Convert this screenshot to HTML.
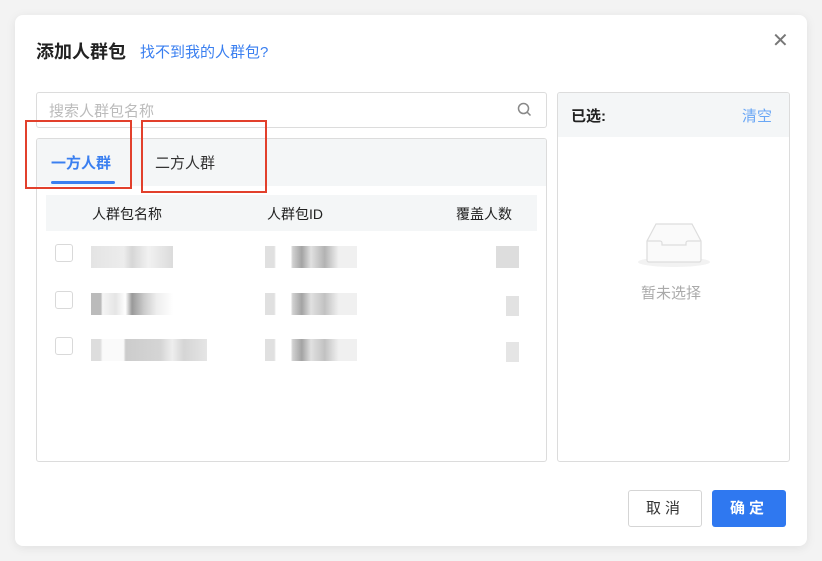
<!DOCTYPE html>
<html><head><meta charset="utf-8"><style>
*{box-sizing:border-box;margin:0;padding:0}
body{width:822px;height:561px;background:#f3f3f3;font-family:"Liberation Sans","Noto Sans CJK SC",sans-serif;position:relative;overflow:hidden}
.a{position:absolute}
.modal{left:15px;top:15px;width:792px;height:531px;background:#fff;border-radius:8px;box-shadow:0 2px 10px rgba(0,0,0,.08)}
.cb{position:absolute;left:55px;width:18px;height:18px;border:1px solid #d9d9d9;border-radius:3px;background:#fff}
</style></head><body>
<div class="a modal"></div>
<div class="a" style="left:36px;top:38px;font-size:18px;font-weight:bold;color:#222">添加人群包</div>
<div class="a" style="left:140px;top:41px;font-size:15px;color:#3a7ff0">找不到我的人群包?</div>
<div class="a" style="left:772px;top:28px;font-size:20px;color:#777">✕</div>

<div class="a" style="left:36px;top:92px;width:511px;height:36px;border:1px solid #dcdcdc;border-radius:3px"></div>
<div class="a" style="left:49px;top:100px;font-size:15px;color:#bbb">搜索人群包名称</div>
<svg class="a" style="left:517px;top:102px" width="15" height="15" viewBox="0 0 15 15"><circle cx="6.5" cy="6.5" r="5" fill="none" stroke="#888" stroke-width="1.5"/><path d="M10 10l3.5 3.5" stroke="#888" stroke-width="1.5"/></svg>

<div class="a" style="left:36px;top:138px;width:511px;height:324px;border:1px solid #dcdcdc;border-radius:3px;overflow:hidden">
 <div style="height:47px;background:#f4f6f7"></div>
</div>
<div class="a" style="left:51px;top:152px;font-size:15px;font-weight:bold;color:#3a7ff0">一方人群</div>
<div class="a" style="left:51px;top:181px;width:64px;height:3px;background:#3a7ff0;border-radius:2px"></div>
<div class="a" style="left:155px;top:152px;font-size:15px;color:#333">二方人群</div>

<div class="a" style="left:46px;top:195px;width:491px;height:36px;background:#f4f6f7"></div>
<div class="a" style="left:92px;top:204px;font-size:14px;color:#222">人群包名称</div>
<div class="a" style="left:267px;top:204px;font-size:14px;color:#222">人群包ID</div>
<div class="a" style="left:456px;top:204px;font-size:14px;color:#222">覆盖人数</div>

<div class="cb" style="top:244px"></div><div class="cb" style="top:291px"></div><div class="cb" style="top:337px"></div>
<div class="a" style="left:91px;top:246px;width:82px;height:22px;background:linear-gradient(90deg,#ddd,#e8e8e8 40%,#ccc 50%,#eee 70%,#d2d2d2);opacity:.8"></div>
<div class="a" style="left:265px;top:246px;width:92px;height:22px;background:linear-gradient(90deg,#ddd 10%,#fff 12%,#fff 28%,#ccc 30%,#999 40%,#ddd 50%,#aaa 65%,#eee 80%);opacity:.9"></div>
<div class="a" style="left:496px;top:246px;width:23px;height:22px;background:#ddd"></div>
<div class="a" style="left:91px;top:293px;width:82px;height:22px;background:linear-gradient(90deg,#bbb 12%,#f5f5f5 14%,#e5e5e5 30%,#fff 42%,#999 50%,#ccc 65%,#eee 80%,#fff)"></div>
<div class="a" style="left:265px;top:293px;width:92px;height:22px;background:linear-gradient(90deg,#ddd 10%,#fff 12%,#fff 28%,#ccc 30%,#999 40%,#ddd 50%,#bbb 65%,#eee 80%);opacity:.9"></div>
<div class="a" style="left:506px;top:296px;width:13px;height:20px;background:#e2e2e2"></div>
<div class="a" style="left:91px;top:339px;width:116px;height:22px;background:linear-gradient(90deg,#ddd 8%,#fafafa 10%,#fafafa 28%,#ccc 30%,#d5d5d5 60%,#eee 70%,#d5d5d5 80%,#e5e5e5)"></div>
<div class="a" style="left:265px;top:339px;width:92px;height:22px;background:linear-gradient(90deg,#ddd 10%,#fff 12%,#fff 28%,#ccc 30%,#999 40%,#ddd 50%,#bbb 65%,#eee 80%);opacity:.9"></div>
<div class="a" style="left:506px;top:342px;width:13px;height:20px;background:#e5e5e5"></div>

<div class="a" style="left:557px;top:92px;width:233px;height:370px;border:1px solid #dcdcdc;border-radius:3px;overflow:hidden"><div style="height:44px;background:#f4f6f7"></div></div>
<div class="a" style="left:571px;top:105px;font-size:15px;font-weight:bold;color:#222">已选:</div>
<div class="a" style="left:742px;top:105px;font-size:15px;color:#6aa7f5">清空</div>
<svg class="a" style="left:636px;top:220px" width="76" height="50" viewBox="0 0 76 50"><ellipse cx="38" cy="42" rx="36" ry="5" fill="#f2f2f2"/><path d="M11 21 L20 4 H56 L65 21 V40 a2 2 0 0 1-2 2 H13 a2 2 0 0 1-2-2Z" fill="#fafafa" stroke="#ddd" stroke-width="1.2"/><path d="M11 21 H24 a2 2 0 0 1 2 2 v2 h24 v-2 a2 2 0 0 1 2-2 H65" fill="none" stroke="#ddd" stroke-width="1.2"/></svg>
<div class="a" style="left:641px;top:282px;font-size:15px;color:#aaa">暂未选择</div>

<div class="a" style="left:628px;top:490px;width:74px;height:37px;border:1px solid #d5d5d5;border-radius:3px;font-size:15px;color:#333;text-align:center;line-height:35px;letter-spacing:4px">取消</div>
<div class="a" style="left:712px;top:490px;width:74px;height:37px;background:#2f78f0;border-radius:3px;font-size:15px;font-weight:bold;color:#fff;text-align:center;line-height:37px;letter-spacing:4px">确定</div>

<div class="a" style="left:25px;top:120px;width:107px;height:69px;border:2px solid #e2402c"></div>
<div class="a" style="left:141px;top:120px;width:126px;height:73px;border:2px solid #e2402c"></div>
</body></html>
